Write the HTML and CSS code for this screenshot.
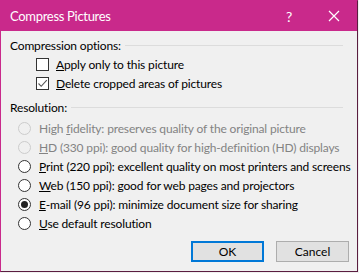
FILE: index.html
```html
<!DOCTYPE html>
<html lang="en">
<head>
  <meta charset="UTF-8">
  <title>Compress Pictures</title>
  <link rel="stylesheet" href="styles.css">
</head>
<body>
  <div class="dialog">
    <div class="titlebar">
      <span class="title">Compress Pictures</span>
      <span class="help">?</span>
      <svg class="close" width="12" height="12" viewBox="0 0 12 12">
        <path d="M1 1 L11 11 M11 1 L1 11" stroke="#fff" stroke-width="1.2" fill="none"/>
      </svg>
    </div>

    <div class="content">
      <div class="group-head">
        <span>Compression options:</span>
        <div class="rule"></div>
      </div>
      <label class="row check-row">
        <span class="box"></span>
        <span><u>A</u>pply only to this picture</span>
      </label>
      <label class="row check-row">
        <span class="box">
          <svg width="11" height="11" viewBox="0 0 11 11">
            <path d="M1.5 5.5 L4.2 8.3 L9.8 2.2" stroke="#555" stroke-width="1.1" fill="none"/>
          </svg>
        </span>
        <span><u>D</u>elete cropped areas of pictures</span>
      </label>

      <div class="group-head second">
        <span>Resolution:</span>
        <div class="rule"></div>
      </div>
      <div class="radios">
        <label class="row radio-row disabled">
          <span class="radio"></span>
          <span>High <u>f</u>idelity: preserves quality of the original picture</span>
        </label>
        <label class="row radio-row disabled">
          <span class="radio"></span>
          <span><u>H</u>D (330 ppi): good quality for high-definition (HD) displays</span>
        </label>
        <label class="row radio-row">
          <span class="radio"></span>
          <span><u>P</u>rint (220 ppi): excellent quality on most printers and screens</span>
        </label>
        <label class="row radio-row">
          <span class="radio"></span>
          <span><u>W</u>eb (150 ppi): good for web pages and projectors</span>
        </label>
        <label class="row radio-row">
          <span class="radio checked"></span>
          <span><u>E</u>-mail (96 ppi): minimize document size for sharing</span>
        </label>
        <label class="row radio-row">
          <span class="radio"></span>
          <span><u>U</u>se default resolution</span>
        </label>
      </div>

      <div class="buttons">
        <button class="btn default">OK</button>
        <button class="btn">Cancel</button>
      </div>
    </div>
  </div>
</body>
</html>
```

FILE: styles.css
```css
html, body {
  margin: 0;
  padding: 0;
}
body {
  font-family: "Lato", "Noto Sans", sans-serif;
  font-size: 12px;
  letter-spacing: -0.15px;
  color: #000;
  background: #f0f0f0;
}
.dialog {
  width: 358px;
  height: 272px;
  box-sizing: border-box;
  border: 1px solid #c9298b;
  border-bottom-color: #5a1d40;
  border-right-color: #5a1d40;
  background: #f0f0f0;
  display: flex;
  flex-direction: column;
}
.titlebar {
  height: 30px;
  background: #c9298b;
  color: #fff;
  display: flex;
  align-items: center;
  padding-left: 9px;
  padding-right: 17px;
  flex-shrink: 0;
}
.title {
  font-size: 13px;
  letter-spacing: -0.3px;
  flex: 1;
  padding-bottom: 1px;
}
.help {
  font-size: 14px;
  margin-right: 36px;
}
.content {
  padding: 5px 14px 0 9px;
  display: flex;
  flex-direction: column;
  flex: 1;
}
.group-head {
  display: flex;
  align-items: center;
  height: 19px;
}
.group-head.second {
  margin-top: 5px;
}
.rule {
  flex: 1;
  height: 1px;
  background: #dcdcdc;
  margin-left: 4px;
}
.row {
  display: flex;
  align-items: center;
  height: 19px;
  white-space: nowrap;
}
.check-row {
  padding-left: 26px;
}
.box {
  width: 11px;
  height: 11px;
  border: 1px solid #333;
  background: #fff;
  margin-right: 7px;
  display: flex;
  align-items: center;
  justify-content: center;
}
.radios {
  margin-top: 2px;
}
.radio-row {
  padding-left: 8px;
}
.radio {
  width: 11px;
  height: 11px;
  border: 1px solid #333;
  border-radius: 50%;
  background: #fff;
  margin-right: 8px;
  display: flex;
  align-items: center;
  justify-content: center;
  flex-shrink: 0;
}
.radio.checked::after {
  content: "";
  width: 7px;
  height: 7px;
  border-radius: 50%;
  background: #222;
}
.disabled {
  color: #838383;
}
.disabled .radio {
  border-color: #cccccc;
  background: #f0f0f0;
}
.buttons {
  display: flex;
  justify-content: flex-end;
  gap: 12px;
  margin-top: 8px;
  margin-right: -6px;
}
.btn {
  width: 73px;
  height: 21px;
  box-sizing: border-box;
  font-family: "Lato", "Noto Sans", sans-serif;
  font-size: 12px;
  background: #e1e1e1;
  border: 1px solid #adadad;
  color: #000;
  padding: 0;
}
.btn.default {
  border: 2px solid #0078d7;
}
```
